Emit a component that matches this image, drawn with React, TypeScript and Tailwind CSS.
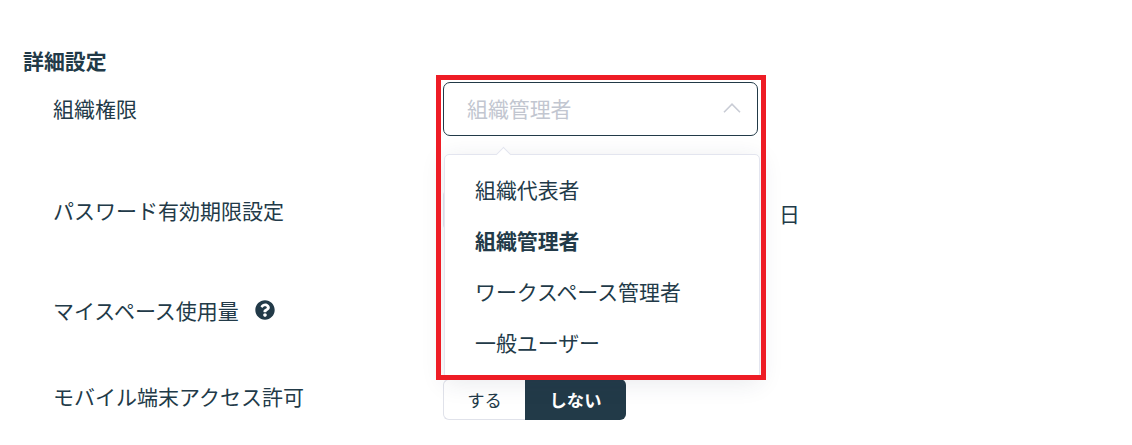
import { FaQuestionCircle } from "react-icons/fa";

const FONT = "[font-family:'Noto_Sans_CJK_JP','Noto_Sans',sans-serif]";

const options = [
  { label: "組織代表者", active: false },
  { label: "組織管理者", active: true },
  { label: "ワークスペース管理者", active: false },
  { label: "一般ユーザー", active: false },
];

function Row({ label, className, children }: { label: React.ReactNode; className: string; children?: React.ReactNode }) {
  return (
    <div className={`flex ${className}`}>
      <div className="flex w-[420px] shrink-0 items-center gap-[16px] pl-[30px] text-[21px]">{label}</div>
      <div className="flex-1">{children}</div>
    </div>
  );
}

function RoleSelect() {
  return (
    <div className="relative w-[315px]">
      <div className="flex h-[54px] items-center justify-between rounded-[7px] border border-[#223a48] bg-white pb-[2px] pl-[23px] pr-[16px] text-[#c2c6d0]">
        <span>組織管理者</span>
        <svg width="18" height="10" viewBox="0 0 18 10" fill="none" stroke="#c9ccd5" strokeWidth="1.6">
          <path d="M1 9.2 9 1.2l8 8" />
        </svg>
      </div>
      <div className="absolute left-px top-[72px] z-10 h-[225px] w-[316px] rounded-[5px] border border-[#e3e5ef] bg-white pt-[8px] shadow-[0_4px_24px_rgba(40,50,80,0.1)]">
        <div className="absolute left-[53px] top-[-6px] h-[11px] w-[11px] rotate-45 border-l border-t border-[#e3e5ef] bg-white" />
        {options.map((o) => (
          <div key={o.label} className={`flex h-[51px] items-center pl-[30px] ${o.active ? "font-bold" : ""}`}>
            {o.label}
          </div>
        ))}
      </div>
      <div className="absolute left-[-7px] top-[-7px] z-20 h-[305px] w-[330px] border-[5px] border-[#ee1c25]" />
    </div>
  );
}

export default function App() {
  return (
    <div className={`relative h-[445px] w-[1132px] overflow-hidden bg-white pl-[23px] pt-[46px] text-[20.9px] leading-[30px] text-[#223a48] ${FONT}`}>
      <h2 className="h-[36px] font-bold leading-[28px]">詳細設定</h2>
      <Row label={<span className="mt-[11px]">組織権限</span>} className="h-[82px] items-start">
        <RoleSelect />
      </Row>
      <Row label="パスワード有効期限設定" className="mt-[16px] h-[60px] items-center">
        <div className="flex items-center">
          <div className="h-[40px] w-[316px] rounded-[5px] border border-[#e3e5ef]" />
          <span className="ml-[20px] mt-[6px]">日</span>
        </div>
      </Row>
      <Row
        label={
          <>
            <span>マイスペース使用量</span>
            <FaQuestionCircle className="size-[20px] text-[#223a48]" />
          </>
        }
        className="mt-[40px] h-[60px] items-center"
      />
      <Row label="モバイル端末アクセス許可" className="mt-[26px] h-[60px]">
        <div className="mt-[13px] flex h-[41px] w-[183px] text-[17.3px]">
          <div className="flex w-[82px] items-center justify-center rounded-l-[6px] border border-r-0 border-[#e0e2ea] bg-white">する</div>
          <div className="flex w-[101px] items-center justify-center rounded-r-[6px] bg-[#223a48] font-bold text-white">しない</div>
        </div>
      </Row>
    </div>
  );
}
